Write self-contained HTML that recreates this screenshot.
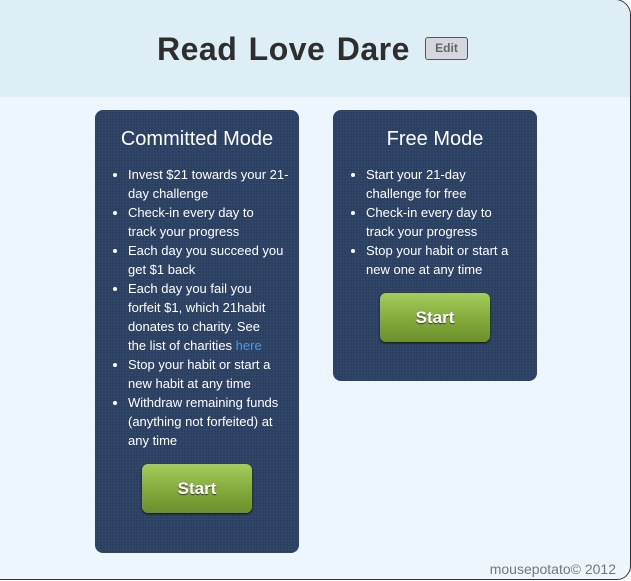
<!DOCTYPE html>
<html><head><style>
body{margin:0;width:631px;height:581px;overflow:hidden;background:#fff;font-family:"Liberation Sans",sans-serif}
#frame{position:absolute;left:-10px;top:-1px;width:639px;height:579px;border:1px solid #333;border-radius:0 0 14px 0;border-top-right-radius:16px;background:#eef6fd;overflow:hidden}
#head{position:absolute;left:0;top:0;right:0;height:97px;background:#deeef7}
h1{position:absolute;left:166px;top:31px;margin:0;font-size:32px;font-weight:bold;color:#2e2e2e;letter-spacing:0.5px;word-spacing:2px}
.edit{position:absolute;left:434px;top:37px;width:41px;height:21px;border:1px solid #555;border-radius:3px;background:#d4d8de;font-size:12px;font-weight:bold;color:#666;text-align:center;line-height:21px}
.card{position:absolute;width:204px;background:#2b3f62;border-radius:8px;color:#fff;background-image:radial-gradient(rgba(255,255,255,.05) 1px,transparent 1px);background-size:3px 3px}
.card h2{margin:0;text-align:center;font-weight:normal;font-size:20px;padding-top:18px;height:37px}
.card ul{margin:0;padding:0 0 0 33px;font-size:13px;line-height:19px;width:170px;white-space:nowrap}
.card a{color:#4c9ad8}
.btn{position:absolute;width:110px;height:49px;border-radius:6px;background:linear-gradient(#a4cd5c,#86ac3d 50%,#6b8f2b);box-shadow:0 1px 2px #111;color:#fff;font-weight:bold;font-size:17px;text-align:center;line-height:49px;text-shadow:0 1px 1px #333}
#foot{position:absolute;right:14px;bottom:2px;font-size:14px;color:#777}
</style></head><body>
<div id="frame">
<div id="head"><h1>Read Love Dare</h1><div class="edit">Edit</div></div>
<div class="card" style="left:104px;top:110px;height:443px">
<h2>Committed Mode</h2>
<ul><li>Invest $21 towards your 21-<br>day challenge</li><li>Check-in every day to<br>track your progress</li><li>Each day you succeed you<br>get $1 back</li><li>Each day you fail you<br>forfeit $1, which 21habit<br>donates to charity. See<br>the list of charities <a>here</a></li><li>Stop your habit or start a<br>new habit at any time</li><li>Withdraw remaining funds<br>(anything not forfeited) at<br>any time</li></ul>
<div class="btn" style="left:47px;top:354px">Start</div>
</div>
<div class="card" style="left:342px;top:110px;height:271px">
<h2>Free Mode</h2>
<ul><li>Start your 21-day<br>challenge for free</li><li>Check-in every day to<br>track your progress</li><li>Stop your habit or start a<br>new one at any time</li></ul>
<div class="btn" style="left:47px;top:183px">Start</div>
</div>
<div id="foot">mousepotato© 2012</div>
</div>
</body></html>
